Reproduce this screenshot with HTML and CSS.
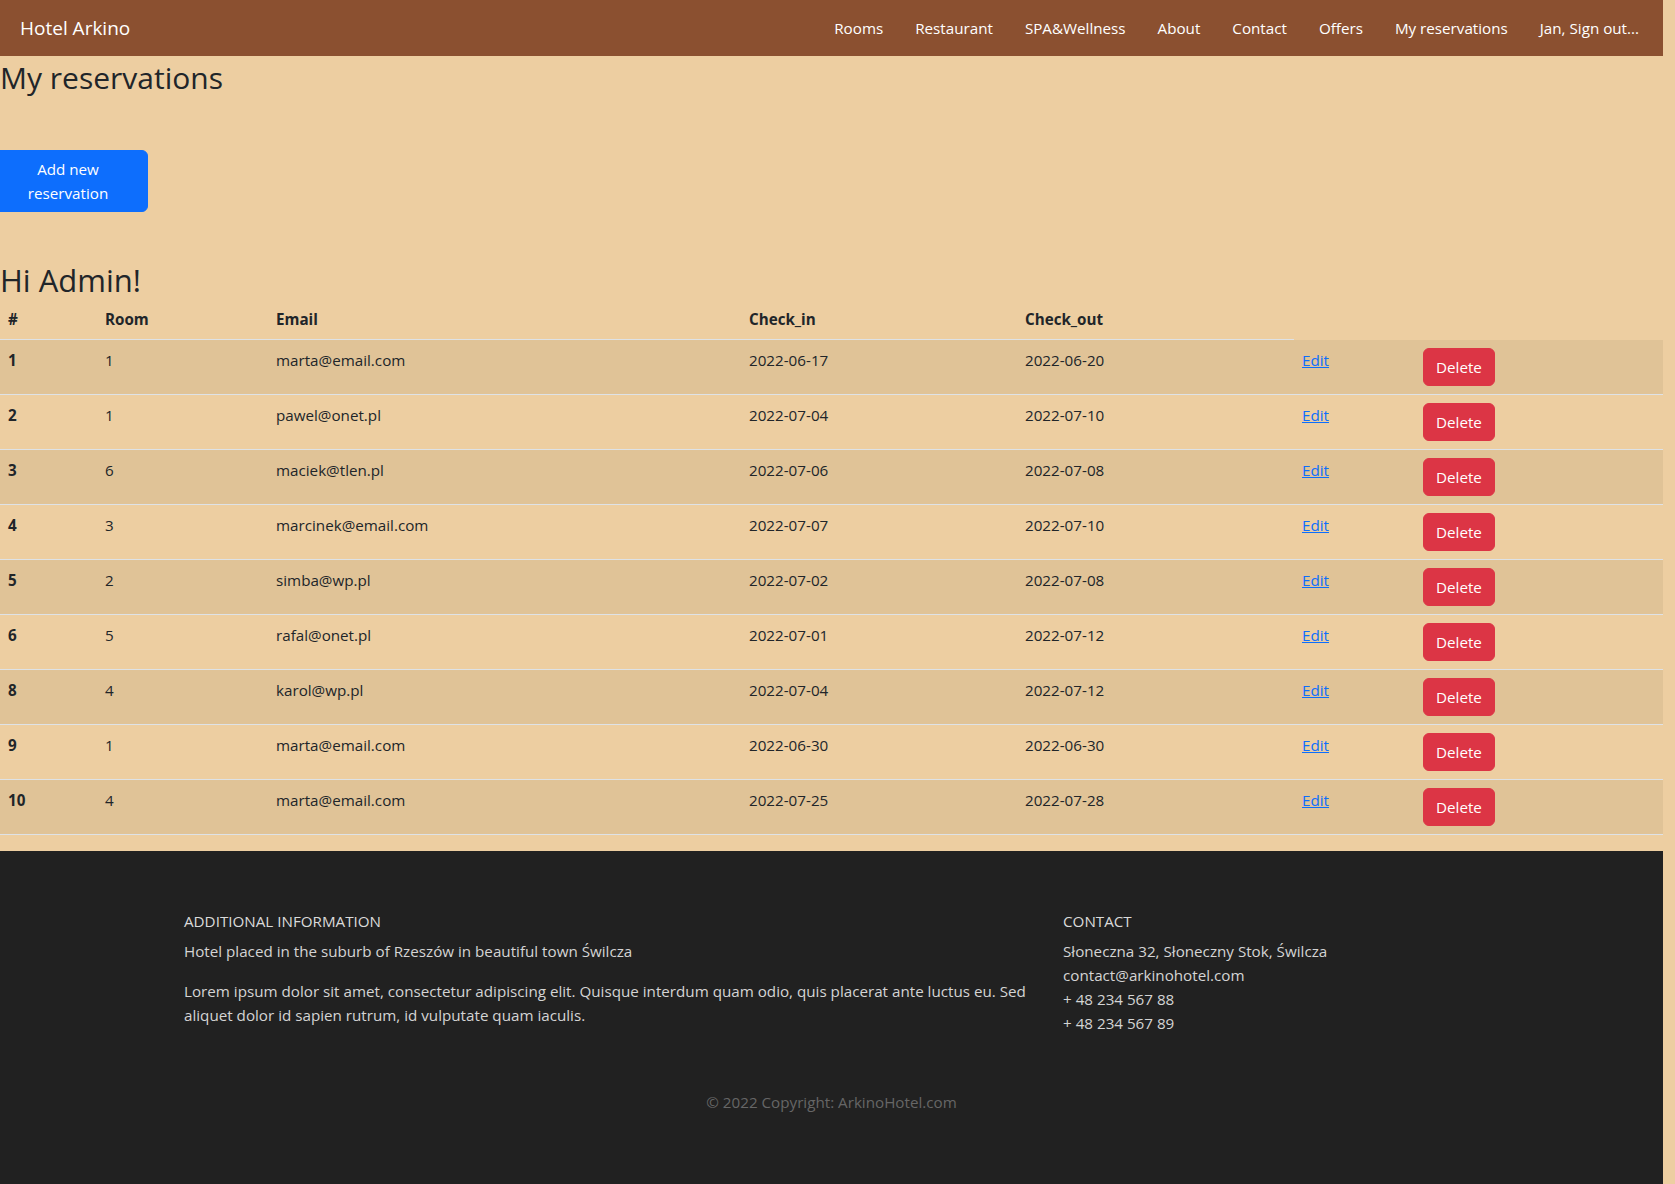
FILE: index.html
```html
<!DOCTYPE html>
<html lang="en">
<head>
<meta charset="utf-8">
<title>My reservations - Hotel Arkino</title>
<link rel="stylesheet" href="styles.css">
</head>
<body>
<div class="page">
  <nav class="navbar">
    <a class="brand" href="#">Hotel Arkino</a>
    <ul class="nav-links">
      <li><a href="#">Rooms</a></li>
      <li><a href="#">Restaurant</a></li>
      <li><a href="#">SPA&amp;Wellness</a></li>
      <li><a href="#">About</a></li>
      <li><a href="#">Contact</a></li>
      <li><a href="#">Offers</a></li>
      <li><a href="#">My reservations</a></li>
      <li><a href="#">Jan, Sign out...</a></li>
    </ul>
  </nav>

  <main class="content">
    <h2 class="page-title">My reservations</h2>
    <div class="actions">
      <button class="btn btn-primary btn-add">Add new reservation</button>
    </div>
    <h2 class="greeting">Hi Admin!</h2>
    <table class="table">
      <colgroup>
        <col class="c-id"><col class="c-room"><col class="c-email"><col class="c-in"><col class="c-out"><col class="c-edit"><col class="c-del">
      </colgroup>
      <thead>
        <tr><th>#</th><th>Room</th><th>Email</th><th>Check_in</th><th>Check_out</th></tr>
      </thead>
      <tbody>
        <tr><th>1</th><td>1</td><td>marta@email.com</td><td>2022-06-17</td><td>2022-06-20</td><td><a class="link" href="#">Edit</a></td><td><button class="btn btn-danger">Delete</button></td></tr>
        <tr><th>2</th><td>1</td><td>pawel@onet.pl</td><td>2022-07-04</td><td>2022-07-10</td><td><a class="link" href="#">Edit</a></td><td><button class="btn btn-danger">Delete</button></td></tr>
        <tr><th>3</th><td>6</td><td>maciek@tlen.pl</td><td>2022-07-06</td><td>2022-07-08</td><td><a class="link" href="#">Edit</a></td><td><button class="btn btn-danger">Delete</button></td></tr>
        <tr><th>4</th><td>3</td><td>marcinek@email.com</td><td>2022-07-07</td><td>2022-07-10</td><td><a class="link" href="#">Edit</a></td><td><button class="btn btn-danger">Delete</button></td></tr>
        <tr><th>5</th><td>2</td><td>simba@wp.pl</td><td>2022-07-02</td><td>2022-07-08</td><td><a class="link" href="#">Edit</a></td><td><button class="btn btn-danger">Delete</button></td></tr>
        <tr><th>6</th><td>5</td><td>rafal@onet.pl</td><td>2022-07-01</td><td>2022-07-12</td><td><a class="link" href="#">Edit</a></td><td><button class="btn btn-danger">Delete</button></td></tr>
        <tr><th>8</th><td>4</td><td>karol@wp.pl</td><td>2022-07-04</td><td>2022-07-12</td><td><a class="link" href="#">Edit</a></td><td><button class="btn btn-danger">Delete</button></td></tr>
        <tr><th>9</th><td>1</td><td>marta@email.com</td><td>2022-06-30</td><td>2022-06-30</td><td><a class="link" href="#">Edit</a></td><td><button class="btn btn-danger">Delete</button></td></tr>
        <tr><th>10</th><td>4</td><td>marta@email.com</td><td>2022-07-25</td><td>2022-07-28</td><td><a class="link" href="#">Edit</a></td><td><button class="btn btn-danger">Delete</button></td></tr>
      </tbody>
    </table>
  </main>

  <footer class="footer">
    <div class="footer-cols">
      <div class="footer-col footer-col-info">
        <h6 class="footer-heading">Additional information</h6>
        <p>Hotel placed in the suburb of Rzeszów in beautiful town Świlcza</p>
        <p class="last">Lorem ipsum dolor sit amet, consectetur adipiscing elit. Quisque interdum quam odio, quis placerat ante luctus eu. Sed aliquet dolor id sapien rutrum, id vulputate quam iaculis.</p>
      </div>
      <div class="footer-col footer-col-contact">
        <h6 class="footer-heading">Contact</h6>
        <p class="line">Słoneczna 32, Słoneczny Stok, Świlcza</p>
        <p class="line">contact@arkinohotel.com</p>
        <p class="line">+ 48 234 567 88</p>
        <p class="line">+ 48 234 567 89</p>
      </div>
    </div>
    <div class="copyright">© 2022 Copyright: ArkinoHotel.com</div>
  </footer>
</div>
</body>
</html>
```

FILE: styles.css
```css
html {
  background: #edcea1;
}
body {
  margin: 0;
  font-family: "Open Sans", "Noto Sans", sans-serif;
  font-size: 15.2px;
  line-height: 24px;
  color: #212529;
  background: #edcea1;
}
.page {
  width: 1663px;
}

/* Navbar */
.navbar {
  height: 56px;
  background: #8b5030;
  display: flex;
  align-items: center;
  justify-content: space-between;
  padding: 0 24px 0 20px;
}
.brand {
  color: #fff;
  text-decoration: none;
  font-size: 19px;
  line-height: 28px;
}
.nav-links {
  list-style: none;
  margin: 0;
  padding: 0;
  display: flex;
  gap: 32px;
}
.nav-links a {
  color: #fff;
  text-decoration: none;
  font-size: 15.2px;
}

/* Content */
.content {
  display: flex;
  flex-direction: column;
  align-items: flex-start;
}
.page-title,
.greeting {
  margin: 0;
  font-size: 30px;
  font-weight: 400;
  line-height: 38px;
}
.page-title {
  padding-top: 3px;
}
.actions {
  margin-top: 53px;
}
.btn {
  font-family: inherit;
  font-size: 15.2px;
  line-height: 24px;
  border: 1px solid transparent;
  border-radius: 6px;
  padding: 6px 12px;
  color: #fff;
  cursor: pointer;
}
.btn-primary {
  background: #0d6efd;
  border-color: #0d6efd;
}
.btn-add {
  width: 160px;
  margin-left: -12px;
  text-align: center;
  padding: 6px 30px;
}
.btn-danger {
  background: #dc3545;
  border-color: #dc3545;
  display: inline-block;
  vertical-align: top;
}
.greeting {
  font-size: 31px;
  margin-top: 51px;
  line-height: 35px;
  margin-bottom: 1px;
}

/* Table */
.table {
  width: 1663px;
  table-layout: fixed;
  border-collapse: collapse;
  margin-bottom: 16px;
}
.c-id { width: 97px; }
.c-room { width: 171px; }
.c-email { width: 473px; }
.c-in { width: 276px; }
.c-out { width: 277px; }
.c-edit { width: 121px; }
.c-del { width: 248px; }
.table th,
.table td {
  text-align: left;
  vertical-align: top;
  padding: 8px;
  border-bottom: 1px solid #dee2e6;
}
.table th {
  font-weight: 700;
}
.table tbody td,
.table tbody th {
  height: 38px;
}
.table tbody tr:nth-child(odd) {
  background: #e0c397;
}
.link {
  color: #0d6efd;
  text-decoration: underline;
}

/* Footer */
.footer {
  background: #212121;
  color: #d4d4d4;
  min-height: 334px;
  box-sizing: border-box;
  padding-top: 61px;
}
.footer-cols {
  display: flex;
  align-items: flex-start;
  padding-left: 184px;
  gap: 29px;
}
.footer-col-info {
  width: 850px;
}
.footer-heading {
  margin: 0 0 8px;
  font-size: 15.2px;
  font-weight: 400;
  line-height: 19px;
  text-transform: uppercase;
  color: #dadada;
}
.footer p {
  margin: 0 0 16px;
}
.footer p.last,
.footer p.line {
  margin: 0;
}
.copyright {
  margin-top: 31px;
  padding: 24px 0;
  text-align: center;
  color: #666;
}
```
